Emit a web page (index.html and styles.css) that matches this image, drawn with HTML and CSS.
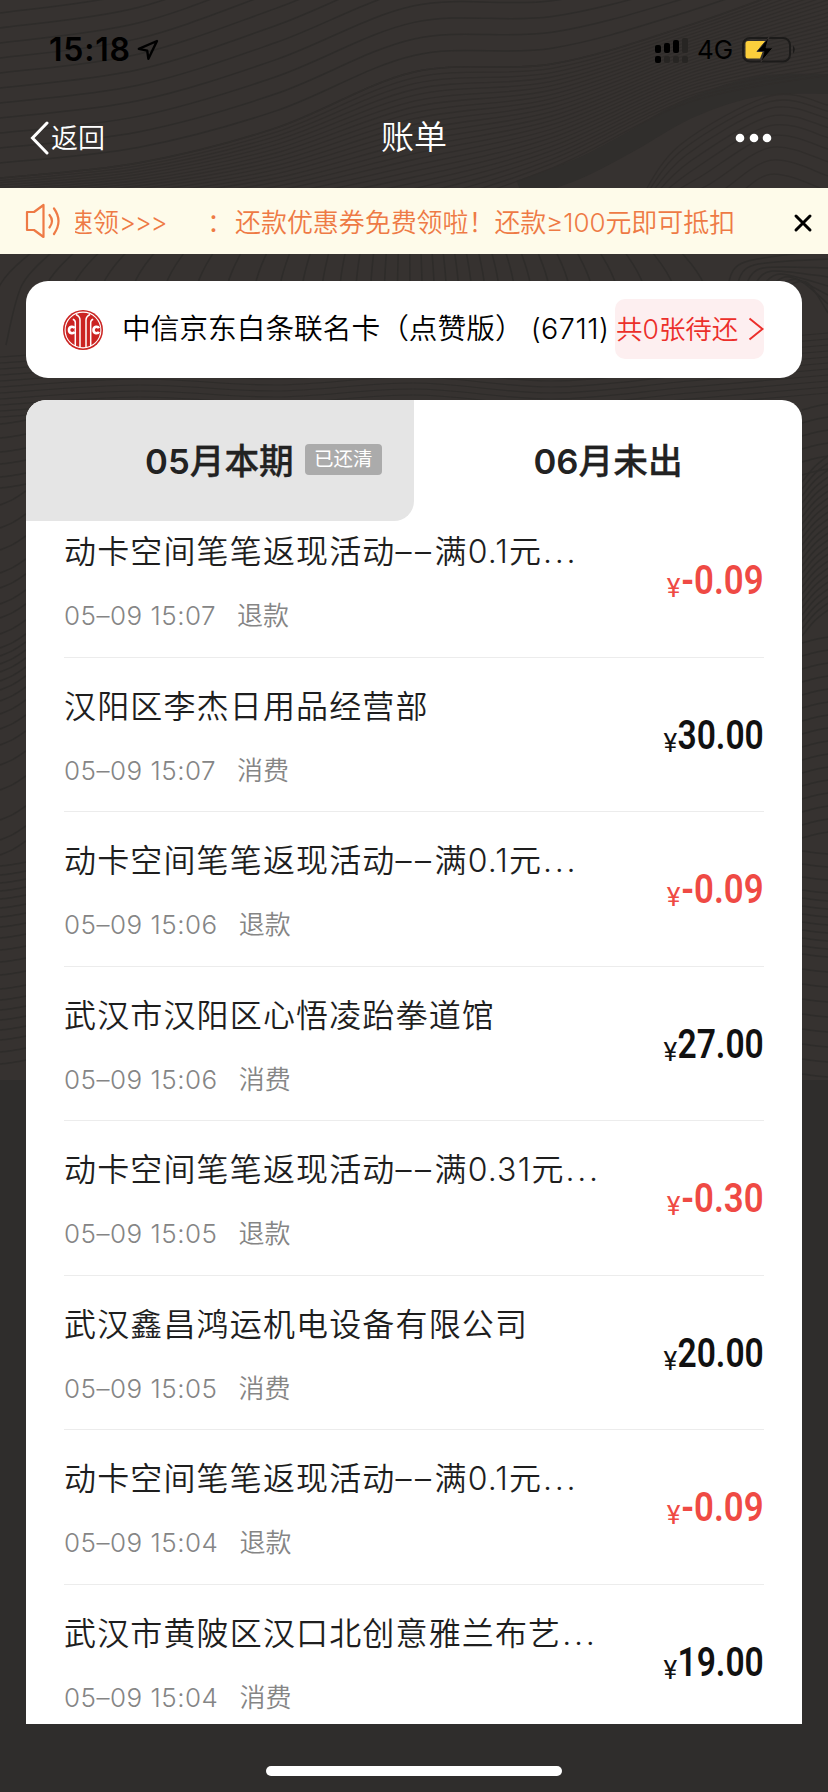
FILE: index.html
```html
<!DOCTYPE html>
<html lang="zh-CN">
<head>
<meta charset="utf-8">
<title>账单</title>
<link rel="stylesheet" href="styles.css">
</head>
<body>
<div class="screen">
  <svg class="contours" id="contours" width="828" height="1080" viewBox="0 0 828 1080" aria-hidden="true"></svg>

  <header class="status">
    <span class="clock">15:18</span>
    <svg class="loc" width="22" height="22" viewBox="0 0 22 22"><path d="M20 2 1.8 9.8 10.2 11.6 11.4 19.8Z" fill="none" stroke="#000" stroke-width="2.4" stroke-linejoin="round"/></svg>
    <svg class="signal" width="34" height="28" viewBox="0 0 34 28">
      <g fill="#000"><rect x="0" y="9" width="6" height="8" rx="2"/><rect x="9" y="7" width="6" height="10" rx="2"/><rect x="18" y="4" width="6" height="13" rx="2"/><rect x="0" y="20" width="6" height="7" rx="2"/></g>
      <g fill="#272523"><rect x="27" y="2" width="6" height="15" rx="2"/><rect x="9" y="20" width="6" height="7" rx="2"/><rect x="18" y="20" width="6" height="7" rx="2"/><rect x="27" y="20" width="6" height="7" rx="2"/></g>
    </svg>
    <span class="net">4G</span>
    <svg class="battery" width="54" height="28" viewBox="0 0 54 28">
      <rect x="1" y="2" width="47" height="23.500" rx="7" fill="none" stroke="#1c1b1a" stroke-width="2"/>
      <path d="M51 9.500q3.500 4 0 8z" fill="#1c1b1a"/>
      <path d="M6 5h19l-7 17.500H6a2.500 2.500 0 0 1-2.500-2.500V7.500A2.500 2.500 0 0 1 6 5Z" fill="#fccf3c"/>
      <path d="M27 1 15 15.500h7L19 26 31 11.800h-7Z" fill="#000" stroke="#363230" stroke-width="1"/>
    </svg>
  </header>

  <nav class="nav">
    <div class="back"><svg width="20" height="34" viewBox="0 0 20 34"><path d="M17 2 2.500 17 17 32" fill="none" stroke="#fff" stroke-width="3" stroke-linecap="round"/></svg><span>返回</span></div>
    <h1 class="heading">账单</h1>
    <svg class="more" width="38" height="10" viewBox="0 0 38 10" fill="#fff"><circle cx="5" cy="5" r="4.300"/><circle cx="19" cy="5" r="4.300"/><circle cx="32" cy="5" r="4.300"/></svg>
  </nav>

  <div class="notice">
    <svg class="horn" width="36" height="36" viewBox="0 0 36 36" fill="none" stroke="#ee7a45" stroke-width="2.200" stroke-linejoin="round" stroke-linecap="round"><path d="M2 9h7L18.500 2v32L9 27H2Z"/><path d="M24.500 12q5 6 0 12.500M29 5.500q9 12.500 0 25.500"/></svg>
    <div class="ticker"><span class="tail">速领</span><span class="arrows">&gt;&gt;&gt;</span><span class="lead">：</span><span class="msg">还款优惠券免费领啦！还款≥100元即可抵扣还</span></div>
    <svg class="close" width="20" height="20" viewBox="0 0 20 20"><path d="M3 3 17 17M17 3 3 17" stroke="#000" stroke-width="3" stroke-linecap="round"/></svg>
  </div>

  <section class="account">
    <svg class="bank" width="40" height="40" viewBox="0 0 40 40">
      <circle cx="20" cy="20" r="20" fill="#cb2422"/>
      <circle cx="20" cy="20" r="17.900" fill="none" stroke="#fff" stroke-width="1.100"/>
      <g fill="none" stroke="#fff" stroke-width="1.500">
        <path d="M13 4.500q4 2 4 5.500V37.500M27 4.500q-4 2-4 5.500V37.500"/>
        <path d="M12.300 36V12.500q0-2.500-2.500-3.300M27.700 36V12.500q0-2.500 2.500-3.300"/>
      </g>
      <g fill="none" stroke="#fff" stroke-width="2.600"><path d="M11.500 18.200C10.500 16.200 6 16 6 20s4.500 3.800 5.500 1.800"/><path d="M36 18.200C35 16.200 30.500 16 30.500 20s4.500 3.800 5.500 1.800"/></g>
    </svg>
    <span class="card-name">中信京东白条联名卡（点赞版）</span><span class="card-no">(6711)</span>
    <div class="due"><span>共<i>0</i>张待还</span><svg width="16" height="24" viewBox="0 0 16 24"><path d="M1.500 1.500 14.500 12 1.500 22.500" fill="none" stroke="#ec2f2b" stroke-width="2"/></svg></div>
  </section>

  <main class="panel">
    <div class="tabs">
      <div class="tab tab-on"><b>05<em>月本期</em></b><span class="badge">已还清</span></div>
      <div class="tab"><b>06<em>月未出</em></b></div>
    </div>
    <div class="list">
      <article class="row"><div><h2>动卡空间笔笔返现活动<i class="dash">––</i>满<i>0.1</i>元<i class="dots">...</i></h2><p>05–09 15:07<span>退款</span></p></div><div class="amount refund"><small>¥</small><strong>-0.09</strong></div></article>
      <article class="row"><div><h2>汉阳区李杰日用品经营部</h2><p>05–09 15:07<span>消费</span></p></div><div class="amount"><small>¥</small><strong>30.00</strong></div></article>
      <article class="row"><div><h2>动卡空间笔笔返现活动<i class="dash">––</i>满<i>0.1</i>元<i class="dots">...</i></h2><p>05–09 15:06<span>退款</span></p></div><div class="amount refund"><small>¥</small><strong>-0.09</strong></div></article>
      <article class="row"><div><h2>武汉市汉阳区心悟凌跆拳道馆</h2><p>05–09 15:06<span>消费</span></p></div><div class="amount"><small>¥</small><strong>27.00</strong></div></article>
      <article class="row"><div><h2>动卡空间笔笔返现活动<i class="dash">––</i>满<i>0.31</i>元<i class="dots">...</i></h2><p>05–09 15:05<span>退款</span></p></div><div class="amount refund"><small>¥</small><strong>-0.30</strong></div></article>
      <article class="row"><div><h2>武汉鑫昌鸿运机电设备有限公司</h2><p>05–09 15:05<span>消费</span></p></div><div class="amount"><small>¥</small><strong>20.00</strong></div></article>
      <article class="row"><div><h2>动卡空间笔笔返现活动<i class="dash">––</i>满<i>0.1</i>元<i class="dots">...</i></h2><p>05–09 15:04<span>退款</span></p></div><div class="amount refund"><small>¥</small><strong>-0.09</strong></div></article>
      <article class="row"><div><h2>武汉市黄陂区汉口北创意雅兰布艺<i class="dots">...</i></h2><p>05–09 15:04<span>消费</span></p></div><div class="amount"><small>¥</small><strong>19.00</strong></div></article>
    </div>
  </main>

  <footer class="foot"><div class="home"></div></footer>
</div>
<script src="contours.js"></script>
</body>
</html>
```

FILE: styles.css
```css
* { box-sizing: border-box; margin: 0; padding: 0; }
body { background: #2f2d2c; font-family: Inter, "Noto Sans CJK SC", sans-serif; }
i, em { font-style: normal; }
svg { display: block; flex: none; }
.screen { position: relative; width: 828px; height: 1792px; overflow: hidden; display: flex; flex-direction: column; isolation: isolate; }
.contours { position: absolute; inset: 0; z-index: -1; background: #363230; }

.status { height: 96px; display: flex; align-items: center; padding: 3px 32px 0 49px; color: #000; }
.clock { width: 82px; font-size: 32px; font-weight: 600; letter-spacing: .8px; line-height: 40px; white-space: nowrap; }
.loc { margin-left: 6px; }
.signal { margin-left: auto; }
.net { width: 36px; margin: 0 9px 0 8px; font-size: 26px; line-height: 40px; }

.nav { height: 92px; display: grid; grid-template-columns: 1fr auto 1fr; align-items: center; padding: 0 57px 8px 30px; color: #fff; }
.back { display: flex; align-items: center; font-size: 27px; line-height: 40px; font-weight: 350; }
.back span { margin: 2px 0 0 1px; }
.heading { font-size: 33px; font-weight: 350; line-height: 46px; margin: -2px 0 0 27px; }
.more { justify-self: end; margin-right: -2px; }

.notice { height: 66px; display: flex; align-items: center; padding: 0 15px 0 25px; background: #fefbea; color: #ee7a45; }
.ticker { width: 660px; margin: 3px 0 0 14px; height: 40px; overflow: hidden; display: flex; font-size: 26px; line-height: 40px; font-weight: 350; white-space: nowrap; }
.tail { margin-left: -8px; }
.arrows { width: 47px; letter-spacing: -1.200px; }
.lead { margin-left: 41px; }
.msg { margin-left: 2px; letter-spacing: -.06px; }
.close { margin: 4px 0 0 auto; }

.account { margin: 27px 26px 0; height: 97px; border-radius: 22px; background: #fff; display: flex; align-items: center; padding: 0 38px 0 37px; color: #000; }
.card-name { margin-left: 19px; font-size: 28.700px; font-weight: 350; line-height: 40px; white-space: nowrap; margin-top: -1px; }
.card-no { margin-left: 7px; font-size: 28.700px; font-weight: 350; letter-spacing: .5px; white-space: nowrap; margin-top: -2px; }
.due { margin-left: auto; width: 149px; height: 60px; border-radius: 10px; background: #fdeff0; color: #ec2f2b; display: flex; align-items: center; justify-content: space-between; padding-left: 1px; font-size: 26.500px; font-weight: 350; white-space: nowrap; margin-top: -1px; }
.due span { margin-top: -3px; }

.panel { margin: 22px 26px 0; height: 1324px; border-radius: 20px 20px 0 0; background: #fff; overflow: hidden; display: flex; flex-direction: column; }
.tabs { height: 121px; flex: none; display: grid; grid-template-columns: 1fr 1fr; }
.tab { display: flex; align-items: center; justify-content: center; color: #222; }
.tab b { font-size: 34.700px; font-weight: 600; letter-spacing: 0; line-height: 48px; white-space: nowrap; }
.tab em { font-weight: 500; -webkit-text-stroke: .3px; }
.tab-on { background: #e5e5e5; border-radius: 0 0 20px 0; justify-content: flex-start; padding-left: 119px; }
.badge { margin: -2px 0 0 11px; width: 77px; height: 31px; border-radius: 4px; background: #ababab; color: #fff; font-size: 19.500px; line-height: 30px; text-align: center; white-space: nowrap; }

.list { flex: 1; min-height: 0; overflow: hidden; padding: 0 38px; }
.row { height: 154.500px; display: flex; justify-content: space-between; align-items: flex-start; border-bottom: 1.500px solid #ececec; padding-top: 25px; }
.row:first-child { margin-top: -18px; }
.row h2 { font-size: 32px; font-weight: 350; letter-spacing: 1.150px; line-height: 48px; color: #1e1e1e; white-space: nowrap; }
.dash { letter-spacing: 3.500px; }
.dots { margin-left: 1px; letter-spacing: 2.700px; }
.row p { margin-top: 16px; font-size: 26px; line-height: 48px; font-weight: 350; letter-spacing: .5px; color: #858585; white-space: nowrap; }
.row p span { margin-left: 21px; letter-spacing: 0; }
.amount { display: flex; align-items: baseline; color: #111; padding-top: 29px; }
.amount small { position: relative; top: 3px; font-family: Roboto, sans-serif; font-size: 26px; line-height: 48px; }
.amount strong { display: block; margin-left: -16px; font-family: Roboto, sans-serif; font-size: 40px; line-height: 48px; font-weight: 600; transform: scaleX(.84); transform-origin: right; }
.refund { color: #ef4a44; }
.refund strong { margin-left: -11px; transform: scaleX(.87); }

.foot { flex: 1; display: flex; justify-content: center; align-items: flex-start; padding-top: 42px; }
.home { width: 296px; height: 10px; border-radius: 5px; background: #fff; }
```

FILE: contours.js
```js
// Draws the topographic line texture behind the page.
const svg = document.getElementById('contours');
const NS = 'http://www.w3.org/2000/svg';

function stroke(points, width = 1.5, color = '#2e2c2a') {
  let d = `M${points[0][0]} ${points[0][1]}`;
  for (let i = 0; i < points.length - 1; i++) {
    const p0 = points[i - 1] || points[i], p1 = points[i], p2 = points[i + 1], p3 = points[i + 2] || p2;
    d += `C${p1[0] + (p2[0] - p0[0]) / 6} ${p1[1] + (p2[1] - p0[1]) / 6} ${p2[0] - (p3[0] - p1[0]) / 6} ${p2[1] - (p3[1] - p1[1]) / 6} ${p2[0]} ${p2[1]}`;
  }
  const path = document.createElementNS(NS, 'path');
  path.setAttribute('d', d);
  path.setAttribute('fill', 'none');
  path.setAttribute('stroke', color);
  path.setAttribute('stroke-width', width);
  svg.append(path);
}

// Blends evenly between two ridge lines sampled every 138px.
function family(a, b, count, width, color) {
  for (let n = 0; n <= count; n++) {
    const t = n / count;
    stroke(a.map((y, i) => [i * 138, y + (b[i] - y) * t]), width, color);
  }
}

stroke([[520, 190], [580, 168], [630, 142], [690, 108], [760, 86], [828, 84]], 20, '#302e2c');
family([13, -8, -60, -110, -110, -130, -160], [178, 163, 128, 72, 64, 25, -25], 11, 1.5);
family([178, 163, 128, 72, 64, 25, -25], [236, 232, 228, 212, 168, 102, 75], 24, 1.3, '#302d2b');
for (let n = 0; n < 12; n++) {
  const k = n * (5 + n * 0.6);
  stroke([[640 + k / 2, 200], [680 + k / 2, 145 + k * .8], [770, 96 + k], [828, 105 + k * 1.1]], 1.3, '#302d2b');
}

// Steep lines in the gap under the notice.
for (let x = 0; x < 730; x += 22 + 10 * Math.sin(x / 90)) {
  const lean = 34 - x / 12;
  stroke([[x + lean, 250], [x, 285], [x - lean * .5, 345]]);
}
for (let n = 0; n < 8; n++) stroke([[728 + n * 9, 284], [745 + n * 9, 262 + n * 3], [828, 250 + n * 9]]);

// Near-level lines between the two cards.
for (let n = 0; n < 11; n++) {
  const y = 345 + n * 6;
  stroke([[0, y + 12], [138, y + 4], [276, y + 10], [414, y + 2], [552, y + 12], [690, y], [828, y - 12]], 1.2);
}

// Page margins either side of the statement panel.
[424, 438, 452, 464, 477, 488, 505, 528, 550, 573, 588, 604, 618, 634, 648, 656, 664, 672, 681, 690, 701, 714, 729, 745, 765, 790, 820, 840, 855, 866, 875, 883, 891, 899, 908, 917, 927, 938, 950, 962, 975, 989, 1000, 1010, 1020, 1030, 1040, 1052, 1064]
  .forEach(y => { const r = y > 500 && y < 860 ? 14 : 4; stroke([[0, y], [13, y - r * .4], [26, y - r]]); });
for (let y = 410; y < 1080; y += y < 470 ? 13 : y < 640 ? 7 : y < 880 ? 13 : y < 950 ? 8 : 15) {
  const r = y > 480 && y < 640 ? 26 : y < 850 ? 6 : -3;
  stroke([[802, y], [815, y - r * .6], [828, y - r]]);
}
```
